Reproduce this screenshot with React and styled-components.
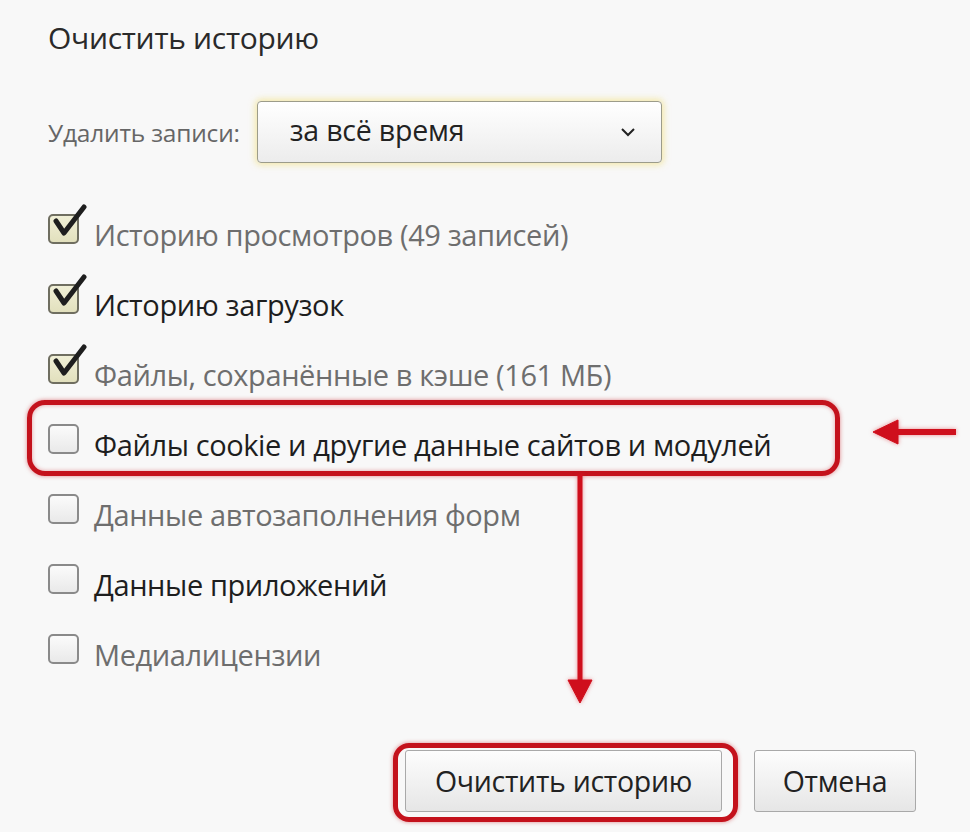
import React from "react";
import styled, { createGlobalStyle } from "styled-components";

const GlobalStyle = createGlobalStyle`
  html, body {
    margin: 0;
    padding: 0;
    background: #f8f8f8;
  }
  body {
    font-family: "Open Sans", "Noto Sans", sans-serif;
    color: #222;
  }
`;

const options = [
  { label: "Историю просмотров (49 записей)", checked: true, muted: true },
  { label: "Историю загрузок", checked: true },
  { label: "Файлы, сохранённые в кэше (161 МБ)", checked: true, muted: true },
  { label: "Файлы cookie и другие данные сайтов и модулей", marked: true },
  { label: "Данные автозаполнения форм", muted: true },
  { label: "Данные приложений" },
  { label: "Медиалицензии", muted: true },
];

function CheckMark() {
  return (
    <svg width="36" height="36" viewBox="0 0 36 36">
      <path
        d="M5 17 L13 29 L33 3"
        fill="none"
        stroke="#1e1e1e"
        strokeWidth="5"
        strokeLinecap="round"
        strokeLinejoin="round"
      />
    </svg>
  );
}

function Chevron() {
  return (
    <svg width="16" height="10" viewBox="0 0 16 10">
      <path d="M2 2 L8 8 L14 2" fill="none" stroke="#222" strokeWidth="2" />
    </svg>
  );
}

function Arrows() {
  return (
    <Overlay width="970" height="832" viewBox="0 0 970 832">
      <g fill="#cf0f1c" stroke="#cf0f1c">
        <line x1="580" y1="474" x2="580" y2="684" strokeWidth="5" />
        <polygon points="568,680 592,680 580,703" strokeWidth="1" />
        <line x1="956" y1="432" x2="894" y2="432" strokeWidth="6" />
        <polygon points="898,420 898,444 873,432" strokeWidth="1" />
      </g>
    </Overlay>
  );
}

export default function App() {
  return (
    <>
      <GlobalStyle />
      <Dialog>
        <Title>Очистить историю</Title>
        <RangeRow>
          <RangeLabel>Удалить записи:</RangeLabel>
          <Dropdown>
            <span>за всё время</span>
            <Chevron />
          </Dropdown>
        </RangeRow>
        <OptionList>
          {options.map((o) => (
            <Option key={o.label} $marked={o.marked}>
              <Box $checked={o.checked}>
                {o.checked && (
                  <Tick>
                    <CheckMark />
                  </Tick>
                )}
              </Box>
              <OptionText $muted={o.muted}>{o.label}</OptionText>
            </Option>
          ))}
        </OptionList>
        <Footer>
          <Button $marked>Очистить историю</Button>
          <Button>Отмена</Button>
        </Footer>
        <Arrows />
      </Dialog>
    </>
  );
}

const Dialog = styled.div`
  position: relative;
  width: 970px;
  height: 832px;
  box-sizing: border-box;
  padding: 18px 0 0 48px;
  display: flex;
  flex-direction: column;
  overflow: hidden;
`;

const Title = styled.div`
  font-size: 30px;
  line-height: 40px;
  font-weight: 400;
  color: #2a2a2a;
  letter-spacing: -0.3px;
`;

const RangeRow = styled.div`
  display: flex;
  align-items: center;
  gap: 17px;
  margin-top: 43px;
`;

const RangeLabel = styled.span`
  font-size: 24.5px;
  color: #666;
  letter-spacing: -0.2px;
`;

const Dropdown = styled.div`
  width: 405px;
  height: 62px;
  box-sizing: border-box;
  display: flex;
  align-items: center;
  justify-content: space-between;
  padding: 0 25px 0 32px;
  border: 1px solid #9c9c8a;
  border-radius: 4px;
  background: linear-gradient(#ffffff, #ececec);
  box-shadow: 0 0 6px 2px rgba(240, 220, 110, 0.55);
  font-size: 28.5px;
  color: #222;
  letter-spacing: -0.2px;

  span {
    margin-top: -4px;
  }
`;

const OptionList = styled.div`
  display: flex;
  flex-direction: column;
  margin-top: 36px;
`;

const Option = styled.div`
  position: relative;
  display: flex;
  align-items: center;
  gap: 15px;
  height: 70px;

  ${({ $marked }) =>
    $marked &&
    `
    &::before {
      content: "";
      position: absolute;
      left: -21px;
      top: -9px;
      width: 813px;
      height: 76px;
      box-sizing: border-box;
      border: 5px solid #c4121c;
      border-radius: 18px;
      box-shadow: 0 0 4px rgba(200, 20, 30, 0.5), inset 0 0 4px rgba(200, 20, 30, 0.4);
      pointer-events: none;
    }
  `}
`;

const Box = styled.div`
  position: relative;
  flex: none;
  width: 31px;
  height: 30px;
  box-sizing: border-box;
  margin-top: -10px;
  border: 2px solid ${({ $checked }) => ($checked ? "#6f6e60" : "#8a8a8a")};
  border-radius: 5px;
  background: ${({ $checked }) =>
    $checked
      ? "linear-gradient(#f0efd6, #e2e0bd)"
      : "linear-gradient(#fbfbfb, #e9e9e9)"};
`;

const Tick = styled.div`
  position: absolute;
  left: 1px;
  top: -12px;
  width: 36px;
  height: 36px;
`;

const OptionText = styled.span`
  font-size: 29px;
  color: ${({ $muted }) => ($muted ? "#6e6e6e" : "#1e1e1e")};
  letter-spacing: -0.4px;
`;

const Footer = styled.div`
  display: flex;
  gap: 32px;
  margin-top: 61px;
  padding-left: 357px;
`;

const Button = styled.button`
  position: relative;
  height: 62px;
  padding: 0;
  border: 1px solid #a9a9a9;
  border-radius: 3px;
  background: linear-gradient(#fdfdfd, #e6e6e6);
  font-family: "Open Sans", "Noto Sans", sans-serif;
  font-size: 28.5px;
  color: #222;
  letter-spacing: -0.3px;
  width: ${({ $marked }) => ($marked ? "317px" : "162px")};

  ${({ $marked }) =>
    $marked &&
    `
    &::before {
      content: "";
      position: absolute;
      left: -13px;
      top: -8px;
      right: -17px;
      bottom: -11px;
      border: 5px solid #c4121c;
      border-radius: 16px;
      box-shadow: 0 0 4px rgba(200, 20, 30, 0.5);
      pointer-events: none;
    }
  `}
`;

const Overlay = styled.svg`
  position: absolute;
  left: 0;
  top: 0;
  pointer-events: none;
  filter: drop-shadow(0 0 2px rgba(220, 30, 40, 0.5));
`;
